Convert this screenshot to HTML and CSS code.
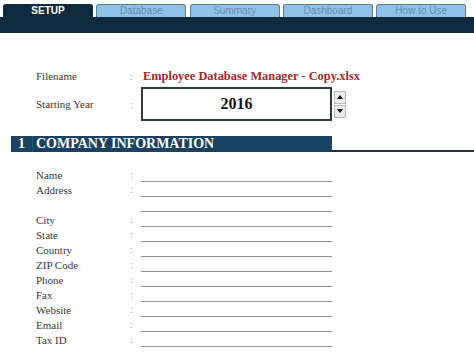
FILE: index.html
```html
<!DOCTYPE html>
<html>
<head>
<meta charset="utf-8">
<link rel="stylesheet" href="styles.css">
</head>
<body>
<div class="tabs">
  <div class="tab active">SETUP</div>
  <div class="tab">Database</div>
  <div class="tab">Summary</div>
  <div class="tab">Dashboard</div>
  <div class="tab">How to Use</div>
</div>
<div class="band"></div>

<div class="meta">
  <div class="row file">
    <span class="label">Filename</span>
    <span class="colon">:</span>
    <span class="value">Employee Database Manager - Copy.xlsx</span>
  </div>
  <div class="row year">
    <span class="label">Starting Year</span>
    <span class="colon">:</span>
    <div class="yearbox">2016</div>
    <div class="spin">
      <div class="btn"><span class="up"></span></div>
      <div class="btn"><span class="down"></span></div>
    </div>
  </div>
</div>

<div class="section">
  <div class="num">1</div>
  <div class="title">COMPANY INFORMATION</div>
  <div class="rest"></div>
</div>

<div class="fields">
  <div class="field"><span class="label">Name</span><span class="colon">:</span><span class="line"></span></div>
  <div class="field"><span class="label">Address</span><span class="colon">:</span><span class="line"></span></div>
  <div class="field"><span class="label"></span><span class="colon"></span><span class="line"></span></div>
  <div class="field"><span class="label">City</span><span class="colon">:</span><span class="line"></span></div>
  <div class="field"><span class="label">State</span><span class="colon">:</span><span class="line"></span></div>
  <div class="field"><span class="label">Country</span><span class="colon">:</span><span class="line"></span></div>
  <div class="field"><span class="label">ZIP Code</span><span class="colon">:</span><span class="line"></span></div>
  <div class="field"><span class="label">Phone</span><span class="colon">:</span><span class="line"></span></div>
  <div class="field"><span class="label">Fax</span><span class="colon">:</span><span class="line"></span></div>
  <div class="field"><span class="label">Website</span><span class="colon">:</span><span class="line"></span></div>
  <div class="field"><span class="label">Email</span><span class="colon">:</span><span class="line"></span></div>
  <div class="field"><span class="label">Tax ID</span><span class="colon">:</span><span class="line"></span></div>
</div>
</body>
</html>
```

FILE: styles.css
```css
* { box-sizing: border-box; }
html, body { margin: 0; padding: 0; background: #fff; }
body {
  width: 474px;
  height: 359px;
  overflow: hidden;
  font-family: "Liberation Serif", "Times New Roman", serif;
  color: #333;
}

.tabs {
  display: flex;
  gap: 3.3px;
  padding: 4px 0 0 3px;
  height: 17px;
  align-items: stretch;
}
.tab {
  width: 90px;
  height: 13px;
  background: #8ec3e7;
  border: 1px solid #5f7c90;
  border-bottom: none;
  border-radius: 3px 3px 0 0;
  font-family: "Liberation Sans", Arial, sans-serif;
  font-size: 10px;
  line-height: 12px;
  color: #6a90b0;
  text-align: center;
}
.tab.active {
  background: #0f2a3c;
  border-color: #0f2a3c;
  color: #fff;
  font-weight: bold;
}
.band {
  height: 16px;
  background: #0f2a3c;
}

.meta {
  padding: 35px 0 0 36px;
}
.row {
  display: flex;
  align-items: center;
}
.label {
  width: 94px;
  font-size: 11px;
  color: #383838;
}
.colon {
  width: 11px;
  font-size: 10px;
  color: #999;
}
.file { height: 16px; }
.value {
  padding-left: 2px;
  font-size: 12.4px;
  font-weight: bold;
  color: #a9272d;
}
.year {
  margin-top: 3px;
  height: 34px;
}
.yearbox {
  width: 191px;
  height: 34px;
  border: 2px solid #2b3a40;
  font-size: 16px;
  font-weight: bold;
  color: #111;
  text-align: center;
  line-height: 29px;
}
.spin {
  margin-left: 2px;
  display: flex;
  flex-direction: column;
  gap: 1px;
}
.btn {
  width: 12px;
  height: 13px;
  background: #ececec;
  border: 1px solid #b9b9b9;
  display: flex;
  align-items: center;
  justify-content: center;
}
.up, .down {
  width: 0; height: 0;
  border-left: 3px solid transparent;
  border-right: 3px solid transparent;
}
.up { border-bottom: 4px solid #111; }
.down { border-top: 4px solid #111; }

.section {
  margin: 15px 0 0 11px;
  display: flex;
  height: 16px;
}
.num {
  width: 22px;
  background: #1b4262;
  border-right: 1px solid #2f5878;
  color: #fff;
  font-weight: bold;
  font-size: 14px;
  line-height: 16px;
  text-align: center;
}
.title {
  width: 299px;
  background: #1a4161;
  color: #fff;
  font-weight: bold;
  font-size: 14px;
  line-height: 16px;
  padding-left: 3px;
}
.rest {
  flex: 1;
  border-bottom: 2px solid #1f3344;
}

.fields {
  margin-top: 15px;
  padding-left: 36px;
}
.field {
  display: flex;
  height: 15px;
  align-items: center;
}
.field .line {
  align-self: stretch;
  width: 191px;
  border-bottom: 1.5px solid #8e9596;
}
```
